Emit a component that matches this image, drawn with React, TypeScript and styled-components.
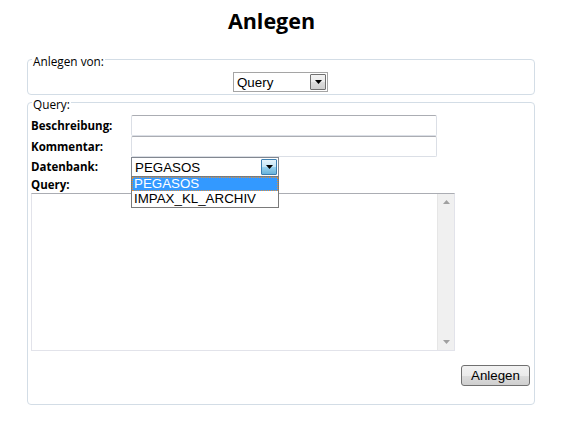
import React from "react";
import styled, { createGlobalStyle } from "styled-components";

const GlobalStyle = createGlobalStyle`
  html, body { margin: 0; padding: 0; background: #ffffff; }
  body { font-family: "Open Sans", "Noto Sans", sans-serif; color: #000; }
  * { box-sizing: border-box; }
`;

const Page = styled.div`
  width: 565px;
  padding: 7px 30px 0 27px;
`;

const Title = styled.h1`
  margin: 0;
  font-family: "Open Sans", sans-serif;
  font-weight: 700;
  font-size: 21.5px;
  line-height: 28px;
  text-align: center;
  padding-right: 19px;
`;

const Fieldset = styled.fieldset<{ $top: number; $pt: number; $pb: number }>`
  margin: ${(p) => p.$top}px 0 0 0;
  min-width: 0;
  border: 1px solid #d3dde6;
  border-radius: 4px;
  padding: ${(p) => p.$pt}px 4px ${(p) => p.$pb}px 3px;
`;

const Legend = styled.legend`
  font-size: 11.8px;
  line-height: 10px;
  height: 14px;
  padding: 4px 1px 0 1px;
  margin-left: 1px;
  color: #000;
`;

const Center = styled.div`
  display: flex;
  justify-content: center;
`;

const SelectWrap = styled.div`
  position: relative;
`;

const SelectBox = styled.div<{ $w: number; $h: number; $border: string }>`
  width: ${(p) => p.$w}px;
  height: ${(p) => p.$h}px;
  border: 1px solid ${(p) => p.$border};
  background: #fff;
  display: flex;
  align-items: center;
  justify-content: space-between;
  padding: 0 1px 0 3px;
  font-family: "Liberation Sans", Arial, sans-serif;
  font-size: 13.33px;
  color: #000;
`;

const ArrowBtn = styled.div<{ $focus?: boolean }>`
  width: 16px;
  height: 16px;
  border: 1px solid ${(p) => (p.$focus ? "#3c7fb1" : "#707070")};
  border-radius: 1px;
  background: ${(p) =>
    p.$focus
      ? "linear-gradient(#e5f4fc, #c4e5f6 50%, #98d1ef 51%, #68b3db)"
      : "linear-gradient(#f2f2f2, #ebebeb 50%, #dddddd 51%, #cfcfcf)"};
  display: flex;
  align-items: center;
  justify-content: center;
`;

const Arrow = () => (
  <svg width="7" height="4" viewBox="0 0 7 4">
    <path d="M0 0 H7 L3.5 4 Z" fill="#000" />
  </svg>
);

const DropList = styled.div`
  position: absolute;
  left: 0;
  top: 19px;
  width: 148px;
  border: 1px solid #7a7a7a;
  background: #fff;
  z-index: 2;
  font-family: "Liberation Sans", Arial, sans-serif;
  font-size: 13.33px;
`;

const Option = styled.div<{ $active?: boolean }>`
  height: ${(p) => (p.$active ? 14 : 16)}px;
  line-height: ${(p) => (p.$active ? 12 : 16)}px;
  background: ${(p) => (p.$active ? "#3399ff" : "#fff")};
  color: ${(p) => (p.$active ? "#fff" : "#000")};
  border: ${(p) => (p.$active ? "1px dotted #e0903c" : "none")};
  padding-left: ${(p) => (p.$active ? 1 : 2)}px;
`;

const FormGrid = styled.div`
  display: grid;
  grid-template-columns: 100px 1fr;
  align-items: center;
`;

const Label = styled.div`
  font-size: 11.5px;
  font-weight: 700;
  line-height: 14px;
`;

const Input = styled.div`
  width: 306px;
  height: 21px;
  border: 1px solid #dbdfe6;
  border-top-color: #abadb3;
  border-radius: 2px;
  background: #fff;
`;

const QueryLabel = styled(Label)`
  grid-column: 1 / span 2;
  height: 16px;
  line-height: 16px;
`;

const TextArea = styled.div`
  grid-column: 1 / span 2;
  width: 424px;
  height: 158px;
  border: 1px solid #e2e3ea;
  border-top-color: #abadb3;
  display: flex;
  justify-content: flex-end;
  background: #fff;
`;

const ScrollBar = styled.div`
  width: 17px;
  height: 100%;
  background: #f0f0f0;
  border-left: 1px solid #e6e6e6;
  display: flex;
  flex-direction: column;
  justify-content: space-between;
  align-items: center;
  padding: 6px 0;
`;

const ButtonRow = styled.div`
  display: flex;
  justify-content: flex-end;
  margin-top: 14px;
`;

const Button = styled.button`
  width: 69px;
  height: 21px;
  border: 1px solid #707070;
  border-radius: 3px;
  background: linear-gradient(#f2f2f2, #ebebeb 50%, #dddddd 51%, #cfcfcf);
  font-family: "Liberation Sans", Arial, sans-serif;
  font-size: 13.33px;
  color: #000;
  padding: 0;
`;

const ScrollArrow = ({ up }: { up?: boolean }) => (
  <svg width="7" height="4" viewBox="0 0 7 4">
    <path d={up ? "M0 4 H7 L3.5 0 Z" : "M0 0 H7 L3.5 4 Z"} fill="#a0a0a0" />
  </svg>
);

export default function App() {
  return (
    <>
      <GlobalStyle />
      <Page>
        <Title>Anlegen</Title>
        <Fieldset $top={17} $pt={6} $pb={2}>
          <Legend>Anlegen von:</Legend>
          <Center>
            <SelectBox $w={95} $h={20} $border="#a5a5a5">
              <span>Query</span>
              <ArrowBtn>
                <Arrow />
              </ArrowBtn>
            </SelectBox>
          </Center>
        </Fieldset>
        <Fieldset $top={0} $pt={6} $pb={18}>
          <Legend>Query:</Legend>
          <FormGrid>
            <Label>Beschreibung:</Label>
            <Input />
            <Label>Kommentar:</Label>
            <Input />
            <Label>Datenbank:</Label>
            <SelectWrap>
              <SelectBox $w={148} $h={20} $border="#828790">
                <span>PEGASOS</span>
                <ArrowBtn $focus>
                  <Arrow />
                </ArrowBtn>
              </SelectBox>
              <DropList>
                <Option $active>PEGASOS</Option>
                <Option>IMPAX_KL_ARCHIV</Option>
              </DropList>
            </SelectWrap>
            <QueryLabel>Query:</QueryLabel>
            <TextArea>
              <ScrollBar>
                <ScrollArrow up />
                <ScrollArrow />
              </ScrollBar>
            </TextArea>
          </FormGrid>
          <ButtonRow>
            <Button>Anlegen</Button>
          </ButtonRow>
        </Fieldset>
      </Page>
    </>
  );
}
